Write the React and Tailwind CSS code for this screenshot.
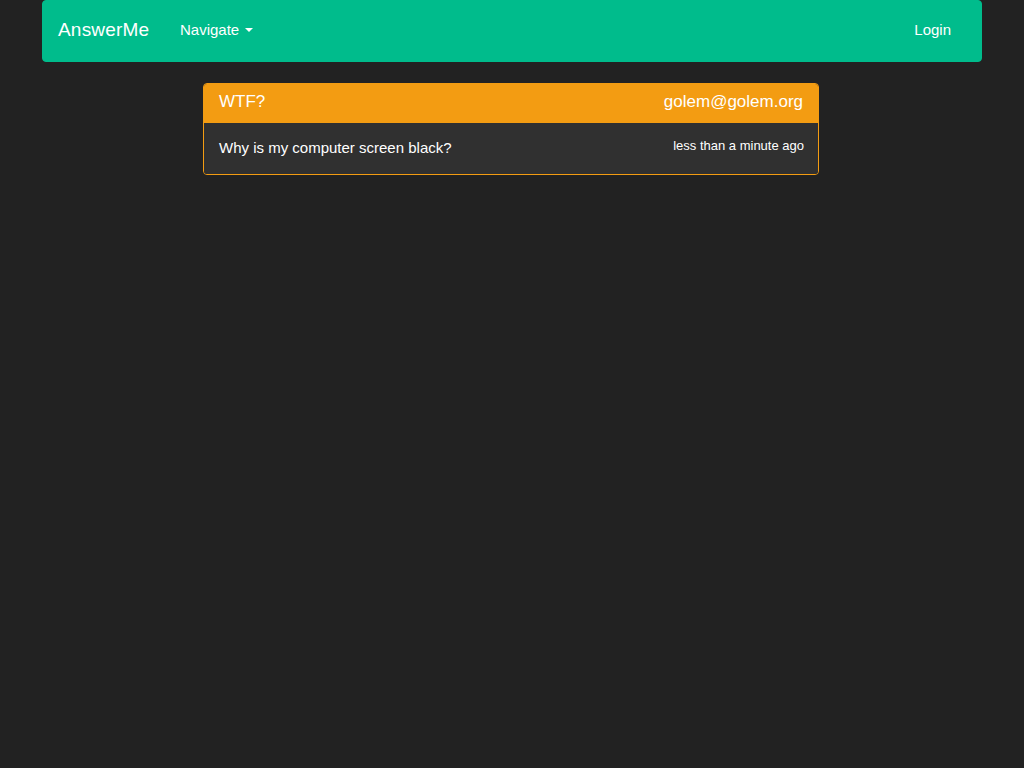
import React from 'react';

export default function App() {
  return (
    <div className="min-h-[768px] bg-[#222222] text-white font-['Liberation_Sans',Arial,sans-serif] text-[15px] leading-[21px]">
      <div className="w-[940px] mx-auto">
        <nav className="h-[62px] pb-[3px] bg-[#00bc8c] border border-[#00bc8c] rounded-[4px] flex items-center justify-between">
          <div className="flex items-center">
            <a className="w-[122px] pl-[15px] text-[19px] leading-[21px] tracking-[0.2px]">AnswerMe</a>
            <a className="px-[15px] flex items-center">
              Navigate
              <span className="ml-[6px] mt-[1px] w-0 h-0 border-x-[4px] border-x-transparent border-t-[4px] border-t-white"></span>
            </a>
          </div>
          <a className="px-[15px] mr-[15px]">Login</a>
        </nav>

        <div className="mt-[21px] ml-[161px] w-[616px] border border-[#f39c12] rounded-[4px] overflow-hidden">
          <div className="bg-[#f39c12] px-[15px] pt-[8px] pb-[12px] flex justify-between text-[17px] leading-[19px]">
            <span>WTF?</span>
            <span>golem@golem.org</span>
          </div>
          <div className="bg-[#303030] px-[15px] pt-[14px] pb-[16px] flex justify-between">
            <span>Why is my computer screen black?</span>
            <span className="text-[13px] leading-[15px] mt-[1px] mr-[-1px]">less than a minute ago</span>
          </div>
        </div>
      </div>
    </div>
  );
}
